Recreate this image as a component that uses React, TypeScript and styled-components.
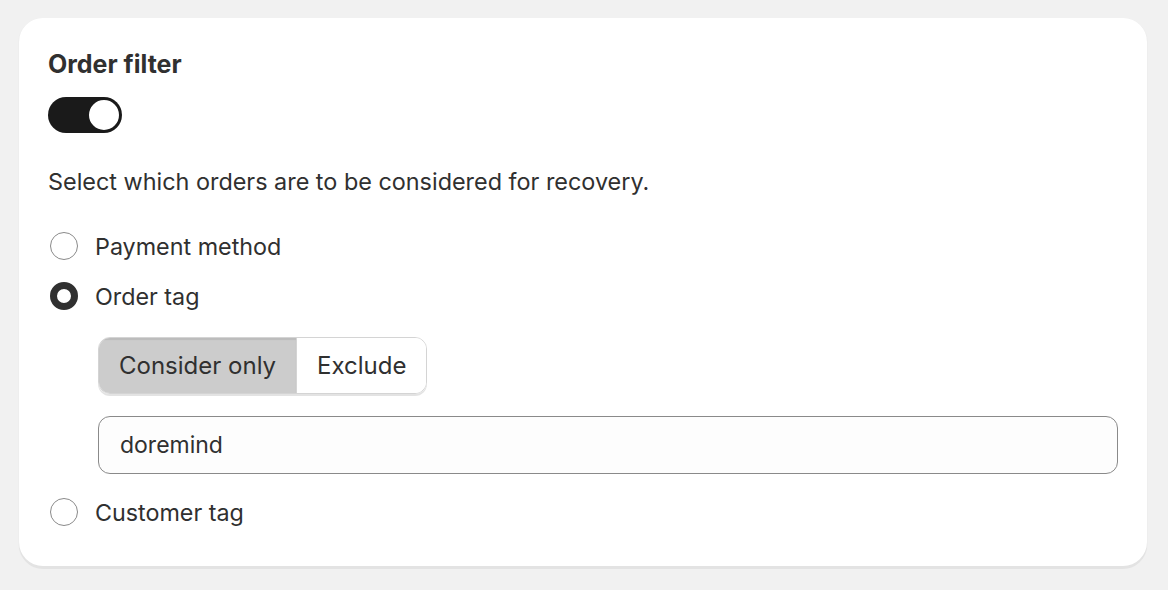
import React, { useState } from "react";
import styled, { createGlobalStyle } from "styled-components";

const GlobalStyle = createGlobalStyle`
  html, body {
    margin: 0;
    padding: 0;
    background: #f1f1f1;
    font-family: Inter, "Noto Sans", sans-serif;
    color: #303030;
  }
  * { box-sizing: border-box; }
`;

const Page = styled.div`
  padding: 18px 21px 24px 19px;
`;

const Card = styled.section`
  background: #ffffff;
  border-radius: 24px;
  box-shadow: 0 3px 0 0 #e3e3e3, 0 1px 2px rgba(0, 0, 0, 0.06);
  padding: 31px 29px 29px 29px;
  display: flex;
  flex-direction: column;
`;

const Title = styled.h2`
  margin: 0;
  font-size: 25px;
  font-weight: 650;
  line-height: 31px;
  color: #303030;
`;

const ToggleTrack = styled.button<{ on: boolean }>`
  margin-top: 17px;
  width: 74px;
  height: 36px;
  padding: 0;
  border: none;
  border-radius: 18px;
  background: ${(p) => (p.on ? "#1a1a1a" : "#d4d4d4")};
  display: flex;
  align-items: center;
  justify-content: ${(p) => (p.on ? "flex-end" : "flex-start")};
  cursor: pointer;
`;

const ToggleKnob = styled.span`
  width: 34px;
  height: 34px;
  margin: 0 1px;
  border-radius: 50%;
  background: #ffffff;
  border: 2px solid #1a1a1a;
`;

const Description = styled.p`
  margin: 34px 0 0 0;
  font-size: 23.4px;
  line-height: 30px;
  color: #303030;
`;

const Options = styled.div`
  margin-top: 24px;
  display: flex;
  flex-direction: column;
`;

const RadioRow = styled.label`
  display: flex;
  align-items: center;
  gap: 17px;
  height: 50px;
  font-size: 23.3px;
  color: #303030;
  cursor: pointer;
`;

const RadioCircle = styled.span<{ checked: boolean }>`
  width: 28px;
  height: 28px;
  margin-left: 2px;
  border-radius: 50%;
  background: #ffffff;
  border: ${(p) => (p.checked ? "7.5px solid #303030" : "1.5px solid #8a8a8a")};
  flex-shrink: 0;
`;

const Nested = styled.div`
  padding: 16px 0 13px 50px;
  display: flex;
  flex-direction: column;
  gap: 22px;
`;

const Segmented = styled.div`
  display: inline-flex;
  align-self: flex-start;
  border: 1.5px solid #d4d4d4;
  border-radius: 12px;
  overflow: hidden;
  box-shadow: 0 2px 0 0 #e3e3e3;
`;

const Segment = styled.button<{ active: boolean }>`
  height: 55px;
  padding: 0 20px;
  border: none;
  border-right: 1.5px solid #d4d4d4;
  background: ${(p) => (p.active ? "#cccccc" : "#ffffff")};
  box-shadow: ${(p) => (p.active ? "inset 0 2px 1px rgba(0,0,0,0.08)" : "none")};
  font-family: inherit;
  font-size: 24px;
  color: #303030;
  cursor: pointer;
  &:last-child {
    border-right: none;
  }
`;

const TextInput = styled.input`
  height: 58px;
  width: 100%;
  padding: 0 21px;
  border: 1.5px solid #8a8a8a;
  border-radius: 12px;
  background: #fdfdfd;
  font-family: inherit;
  font-size: 23px;
  color: #303030;
  outline: none;
`;

const options = ["Payment method", "Order tag", "Customer tag"];

export default function App() {
  const [enabled, setEnabled] = useState(true);
  const [selected, setSelected] = useState("Order tag");
  const [mode, setMode] = useState("Consider only");
  const [tag, setTag] = useState("doremind");

  return (
    <>
      <GlobalStyle />
      <Page>
        <Card>
          <Title>Order filter</Title>
          <ToggleTrack on={enabled} onClick={() => setEnabled(!enabled)}>
            <ToggleKnob />
          </ToggleTrack>
          <Description>
            Select which orders are to be considered for recovery.
          </Description>
          <Options>
            {options.map((opt) => (
              <React.Fragment key={opt}>
                <RadioRow onClick={() => setSelected(opt)}>
                  <RadioCircle checked={selected === opt} />
                  {opt}
                </RadioRow>
                {opt === "Order tag" && selected === opt && (
                  <Nested>
                    <Segmented>
                      {["Consider only", "Exclude"].map((m) => (
                        <Segment
                          key={m}
                          active={mode === m}
                          onClick={() => setMode(m)}
                        >
                          {m}
                        </Segment>
                      ))}
                    </Segmented>
                    <TextInput
                      value={tag}
                      onChange={(e) => setTag(e.target.value)}
                    />
                  </Nested>
                )}
              </React.Fragment>
            ))}
          </Options>
        </Card>
      </Page>
    </>
  );
}
